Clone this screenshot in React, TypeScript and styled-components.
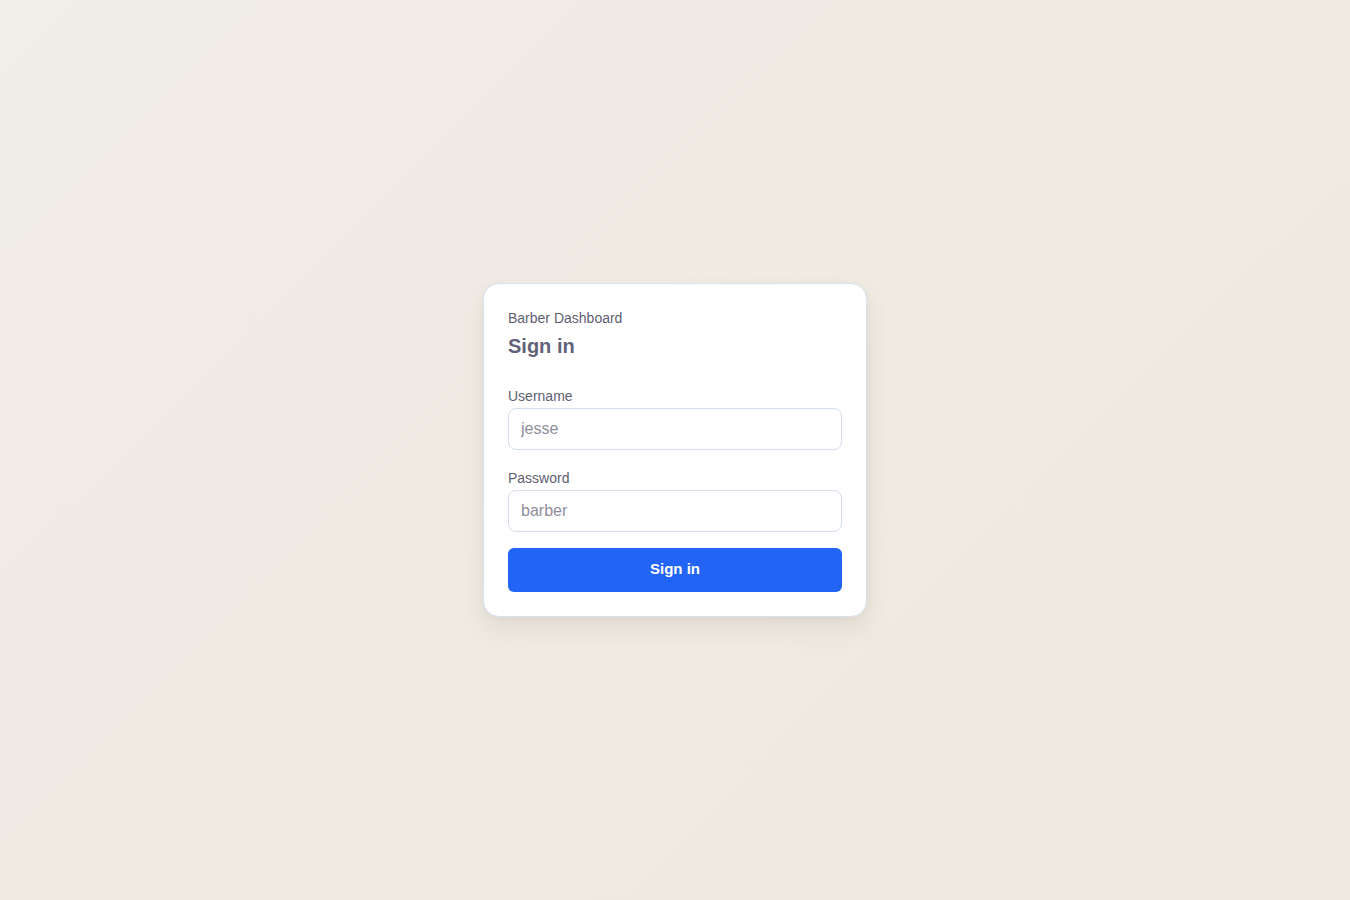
import React from 'react';
import styled, { createGlobalStyle } from 'styled-components';

const GlobalStyle = createGlobalStyle`
    html, body {
        margin: 0;
        padding: 0;
        height: 100%;
    }
    body {
        font-family: 'Liberation Sans', Arial, sans-serif;
        background: #f1ede6;
    }
    #root {
        height: 100%;
    }
    * {
        box-sizing: border-box;
    }
`;

const LoginPageMainDivBox = styled.div`
    min-height: 900px;
    height: 100%;
    display: flex;
    align-items: center;
    justify-content: center;
    background: linear-gradient(135deg, #f1ede7 0%, #efeae2 55%, #eeeae0 100%);
`;

const LoginCard = styled.form`
    width: 384px;
    padding: 24px;
    background: #ffffff;
    border: 1px solid #d8e2ee;
    border-radius: 16px;
    box-shadow: 0 12px 24px rgba(90, 80, 60, 0.09), 0 2px 6px rgba(90, 80, 60, 0.05);
`;

const SubTitle = styled.div`
    font-size: 14px;
    line-height: 20px;
    color: #5e5e72;
`;

const Title = styled.h1`
    margin: 6px 0 28px 0;
    font-size: 20px;
    line-height: 24px;
    font-weight: 700;
    color: #62627a;
`;

const Field = styled.div<{ gapBelow: number }>`
    display: flex;
    flex-direction: column;
    margin-bottom: ${props => props.gapBelow}px;
`;

const Label = styled.label`
    font-size: 14px;
    line-height: 20px;
    color: #5e5e72;
    margin-bottom: 2px;
`;

const TextInput = styled.input`
    width: 100%;
    height: 42px;
    padding: 0 12px;
    border: 1px solid #d3deea;
    border-radius: 8px;
    font-family: 'Liberation Sans', Arial, sans-serif;
    font-size: 16px;
    color: #3d3d4f;
    background: #ffffff;
    outline: none;
    &::placeholder {
        color: #8e8e9a;
    }
`;

const SubmitButton = styled.button`
    width: 100%;
    height: 44px;
    border: none;
    border-radius: 6px;
    background: #2264f5;
    color: #ffffff;
    font-family: 'Liberation Sans', Arial, sans-serif;
    font-size: 15px;
    line-height: 18px;
    font-weight: 700;
    padding: 0 0 2px 0;
    cursor: pointer;
`;

const App = () => {
    return (
        <>
            <GlobalStyle />
            <LoginPageMainDivBox>
                <LoginCard onSubmit={e => e.preventDefault()}>
                    <SubTitle>Barber Dashboard</SubTitle>
                    <Title>Sign in</Title>
                    <Field gapBelow={18}>
                        <Label htmlFor="username">Username</Label>
                        <TextInput id="username" type="text" placeholder="jesse" />
                    </Field>
                    <Field gapBelow={16}>
                        <Label htmlFor="password">Password</Label>
                        <TextInput id="password" type="password" placeholder="barber" />
                    </Field>
                    <SubmitButton type="submit">Sign in</SubmitButton>
                </LoginCard>
            </LoginPageMainDivBox>
        </>
    );
};

export default App;
